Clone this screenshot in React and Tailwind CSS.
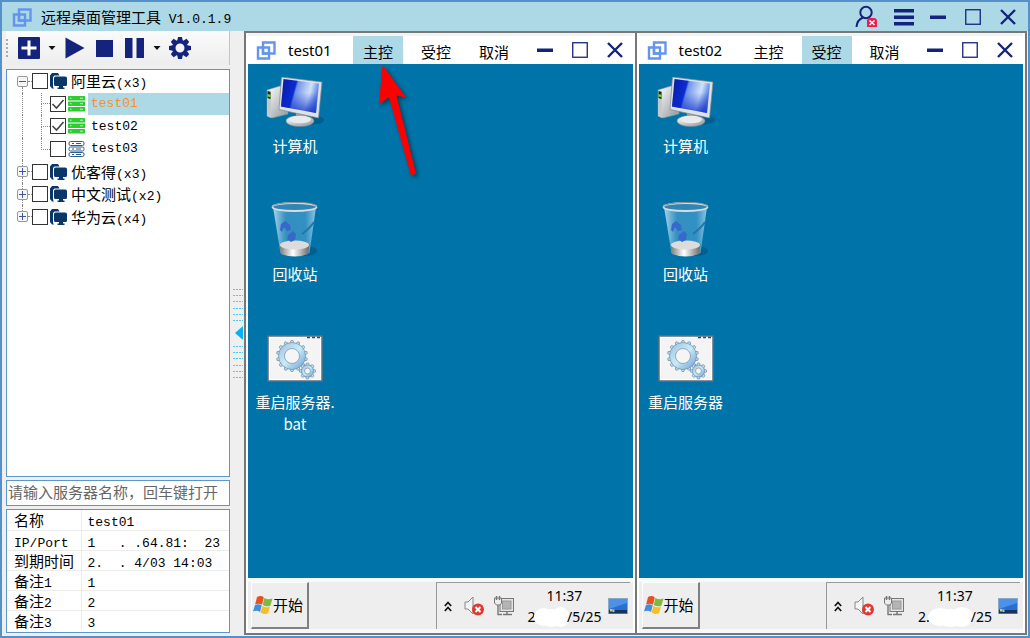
import React from "react";
import clsx from "clsx";

const NAVY = "#14247c";

const groups = [
  {
    id: "aliyun",
    name: "阿里云",
    count: 3,
    open: true,
    servers: [
      { name: "test01", online: true, checked: true, selected: true },
      { name: "test02", online: true, checked: true },
      { name: "test03", online: false, checked: false },
    ],
  },
  { id: "ucloud", name: "优客得", count: 3 },
  { id: "test", name: "中文测试", count: 2 },
  { id: "huawei", name: "华为云", count: 4 },
];

const details = [
  { label: "名称", value: "test01" },
  { label: "IP/Port", value: "1   . .64.81:  23", mono: true },
  { label: "到期时间", value: "2.  . 4/03 14:03" },
  { label: "备注", suffix: "1", value: "1" },
  { label: "备注", suffix: "2", value: "2" },
  { label: "备注", suffix: "3", value: "3" },
];

const tabs = ["主控", "受控", "取消"];

const sessions = [
  {
    name: "test01",
    active: "主控",
    script: ["重启服务器.", "bat"],
    date: ["2", "/5/25"],
    arrow: true,
  },
  {
    name: "test02",
    active: "受控",
    script: ["重启服务器"],
    date: ["2.", "/25"],
  },
];

function Mono({ children }) {
  return (
    <span className="whitespace-pre font-['Liberation_Mono',monospace] text-[13px] leading-none">
      {children}
    </span>
  );
}

/* ---------- icons ---------- */

function LogoIcon() {
  return (
    <svg className="h-5 w-5 shrink-0" viewBox="0 0 20 20" fill="none" stroke="#6495ed" strokeWidth="2.400">
      <path d="M7 2.500h11.500v11H7z" />
      <path d="M2 7.500h11v11H2z" />
      <path d="M7 7.500v6h6" />
    </svg>
  );
}

function MinimizeIcon() {
  return (
    <svg className="h-4 w-4" viewBox="0 0 16 16">
      <rect y="6.500" width="16" height="3.500" fill={NAVY} />
    </svg>
  );
}

function MaximizeIcon() {
  return (
    <svg className="h-4 w-4" viewBox="0 0 16 16">
      <rect x=".75" y=".75" width="14.500" height="14.500" fill="none" stroke={NAVY} strokeWidth="1.300" />
    </svg>
  );
}

function CloseIcon() {
  return (
    <svg className="h-4 w-4" viewBox="0 0 16 16">
      <path d="M1 1l14 14M15 1L1 15" stroke={NAVY} strokeWidth="2.400" />
    </svg>
  );
}

function UserIcon() {
  return (
    <svg className="h-[23px] w-[23px]" viewBox="0 0 23 23" fill="none">
      <circle cx="11" cy="7.500" r="5.700" stroke={NAVY} strokeWidth="2" />
      <path d="M1.500 22c.3-5 3-8 6.500-9.500" stroke={NAVY} strokeWidth="2" />
      <path d="M14 13h6l2 2v7H12v-7z" fill="#ee1c4a" />
      <path d="M14.500 15.500l5 4.500M19.500 15.500l-5 4.500" stroke="#fff" strokeWidth="1.600" />
    </svg>
  );
}

function MenuIcon() {
  return (
    <svg className="h-[18px] w-5" viewBox="0 0 20 18" fill={NAVY}>
      <rect y="1" width="20" height="3.500" />
      <rect y="7.500" width="20" height="3.500" />
      <rect y="14" width="20" height="3.500" />
    </svg>
  );
}

function CaretIcon() {
  return (
    <svg className="h-1 w-2" viewBox="0 0 8 4">
      <path d="M.5 0h7L4 4z" fill="#111" />
    </svg>
  );
}

function GearIcon() {
  return (
    <svg className="h-[22px] w-[22px]" viewBox="-11 -11 22 22" fill={NAVY}>
      {[0, 45, 90, 135, 180, 225, 270, 315].map((a) => (
        <path key={a} d="M-2.800-7L-2-11H2L2.800-7z" transform={`rotate(${a})`} />
      ))}
      <circle r="6.200" fill="none" stroke={NAVY} strokeWidth="3.400" />
    </svg>
  );
}

// folder with a monitor in front of it
function GroupIcon() {
  return (
    <svg className="h-4 w-[17px] shrink-0" viewBox="0 0 17 16" fill="#0b3768">
      <path d="M0 2.500L2 0h6l1.500 2.500h-5L3 4v10l1 1.500H2L0 13z" />
      <path d="M4 5Q4 3.500 5.500 3.500H15q2 0 2 1.500v6.500q0 1.500-1.500 1.500H13v1.500h1.500V16h-7v-1.500H9V13H5.500Q4 13 4 11.500z" />
    </svg>
  );
}

function ServerIcon({ online }) {
  return (
    <svg className="h-4 w-[17px] shrink-0" viewBox="0 0 17 16">
      {[0, 5.5, 11].map((y) =>
        online ? (
          <g key={y}>
            <rect y={y} width="17" height="4.500" rx=".5" fill="#2ecc33" />
            <path d={`M2 ${y + 2.200}h1.500M12 ${y + 2.200}h3`} stroke="#c9f5ca" />
          </g>
        ) : (
          <g key={y} fill="none" stroke="#2c5c8c">
            <rect x="1" y={y + 0.5} width="15" height="4" rx="1.500" />
            <path d={`M4 ${y + 2.500}h2M8 ${y + 2.500}h5`} />
          </g>
        )
      )}
    </svg>
  );
}

function ComputerIcon() {
  return (
    <svg className="h-[50px] w-[60px]" viewBox="0 0 60 50">
      <defs>
        <linearGradient id="screen" x1="0" y1="0" x2="1" y2=".25">
          <stop offset="0" stopColor="#0a1aa0" />
          <stop offset=".4" stopColor="#0b2bd4" />
          <stop offset=".45" stopColor="#6f93ea" />
          <stop offset=".8" stopColor="#cfe2fb" />
          <stop offset="1" stopColor="#5f86e4" />
        </linearGradient>
        <linearGradient id="shade" x1="0" y1="0" x2="0" y2="1">
          <stop offset=".4" stopColor="#0a2ac8" stopOpacity="0" />
          <stop offset="1" stopColor="#0a2ac8" stopOpacity=".8" />
        </linearGradient>
        <linearGradient id="metal" x1="0" y1="0" x2="1" y2="1">
          <stop offset="0" stopColor="#fff" />
          <stop offset="1" stopColor="#8e959b" />
        </linearGradient>
      </defs>
      <ellipse cx="44" cy="43" rx="15" ry="5" fill="#03416b" opacity=".4" />
      <path d="M2 13l13-4 8 3v25L7 41l-5-2z" fill="url(#metal)" stroke="#8b959d" strokeWidth=".5" />
      <path d="M2 13l4 1v27l-4-2z" fill="#c5c9cc" />
      <path d="M2.500 14l3 1v7l-3-1z" fill="#222" />
      <path d="M2.500 17l3 .7v2.500l-3-.7z" fill="#65e52b" />
      <path d="M31 34l10 3v7H31z" fill="#9ba1a6" />
      <ellipse cx="35" cy="44" rx="14" ry="5.500" fill="url(#metal)" stroke="#7d868d" strokeWidth=".6" />
      <ellipse cx="35" cy="42.500" rx="11" ry="3.800" fill="#e8eaec" />
      <path d="M16.500 0L57 5l-3.500 36L14 32.500z" fill="#dfe2e5" stroke="#7c868e" strokeWidth=".7" />
      <path d="M18.500 2L54 6.500 51 36 16 29.500z" fill="url(#screen)" />
      <path d="M18.500 2L54 6.500 51 36 16 29.500z" fill="url(#shade)" />
    </svg>
  );
}

function BinIcon() {
  return (
    <svg className="h-14 w-12" viewBox="0 0 48 56">
      <defs>
        <linearGradient id="glass" x1="0" y1="0" x2="1" y2="0">
          <stop offset="0" stopColor="#b9e0f2" stopOpacity=".9" />
          <stop offset=".3" stopColor="#4296c6" stopOpacity=".8" />
          <stop offset=".75" stopColor="#3e97c8" stopOpacity=".8" />
          <stop offset="1" stopColor="#9cd0ea" stopOpacity=".9" />
        </linearGradient>
        <linearGradient id="base" x1="0" y1="0" x2="1" y2="0">
          <stop offset="0" stopColor="#777" />
          <stop offset=".45" stopColor="#fff" />
          <stop offset="1" stopColor="#666" />
        </linearGradient>
      </defs>
      <ellipse cx="34" cy="49" rx="12" ry="5" fill="#024a78" opacity=".5" />
      <path d="M2 5h43l-6.500 46q-15 6-29 0z" fill="url(#glass)" />
      <path d="M8.500 43l30-1-1.500 10q-13 5-27 0z" fill="url(#base)" />
      <ellipse cx="23.500" cy="43" rx="14.500" ry="4.500" fill="#dcdcdc" />
      <path d="M10 22l4-3 5 4 1 5-4 1-3-4-2 5-2-2zM17 33l5-4 3 3-1 6-4 2-4-3z" fill="#3769cc" />
      <path d="M31 32q8-6 12-12" stroke="#2276a8" strokeWidth="2" fill="none" />
      <ellipse cx="23.500" cy="5" rx="22" ry="4" fill="#2f86b6" stroke="#d5dbdf" strokeWidth="1.800" />
      <path d="M1.500 5q1-4 22-4.500T45.500 5" fill="none" stroke="#777" strokeWidth=".8" />
    </svg>
  );
}

function Cog({ radius, teeth, hole, ...props }) {
  return (
    <g {...props} fill="url(#cog)" stroke="#6f8faa" strokeWidth=".7">
      {Array.from({ length: teeth }, (_, i) => (
        <path
          key={i}
          d={`M-2 ${-radius + 1}L-1-${radius + 2}H1L2 ${-radius + 1}z`}
          transform={`rotate(${(360 / teeth) * i})`}
        />
      ))}
      <circle r={radius} />
      <circle r={hole} fill="#f5f5f5" />
    </g>
  );
}

function BatchIcon() {
  return (
    <svg className="h-[47px] w-[56px]" viewBox="0 0 56 47">
      <defs>
        <linearGradient id="cog" x1="0" y1="0" x2="1" y2="1">
          <stop offset="0" stopColor="#9dbbe0" />
          <stop offset=".5" stopColor="#c9ecf6" />
          <stop offset="1" stopColor="#6b9bd8" />
        </linearGradient>
      </defs>
      <rect x="1" y="1" width="54" height="45" fill="#f4f4f4" stroke="#5c7080" strokeWidth="1.500" />
      <rect x="2.500" y="2.500" width="51" height="42" fill="none" stroke="#fff" />
      <path d="M40 2.500h3M45 2.500h3M50 2.500h3" stroke="#33475c" strokeWidth="1.500" />
      <Cog radius={13.5} teeth={14} hole={7.5} transform="translate(25 21)" />
      <Cog radius={6} teeth={8} hole={3} transform="translate(40.500 36)" />
    </svg>
  );
}

function WindowsFlag() {
  return (
    <svg className="h-[18px] w-5 shrink-0" viewBox="0 0 20 18">
      <path d="M4 1Q8-1 10.800 1.500L9 8.800Q6 6.800 2.200 8.300z" fill="#e8501e" />
      <path d="M11.300 2Q15 4.300 19.500 2.500l-2.200 7.200q-4 1.500-7.500-.6z" fill="#7fb93a" />
      <path d="M2 9Q6 7.500 8.700 9.500L7 16Q4 14 0 15.500z" fill="#3f8fdc" />
      <path d="M9.500 10q3.500 2 7.500.7L15 17.300q-4 1.500-7.500-.7z" fill="#f8be27" />
    </svg>
  );
}

function ChevronsUp() {
  return (
    <svg className="h-[11px] w-2" viewBox="0 0 8 11" fill="none" stroke="#111" strokeWidth="1.700">
      <path d="M.8 5L4 1.500 7.200 5M.8 10L4 6.500 7.200 10" />
    </svg>
  );
}

function MutedIcon() {
  return (
    <svg className="h-5 w-5" viewBox="0 0 20 20">
      <path d="M1 6h3l5-5v17l-5-5H1z" fill="#f4f4f4" stroke="#888" />
      <circle cx="14" cy="13.500" r="6" fill="#dd3a31" />
      <path d="M11.500 11l5 5M16.500 11l-5 5" stroke="#fff" strokeWidth="2" />
    </svg>
  );
}

function NetworkIcon() {
  return (
    <svg className="h-5 w-5" viewBox="0 0 20 20" fill="none" stroke="#777">
      <rect x="6" y="2.500" width="13.500" height="13" fill="#e4e4e4" />
      <rect x="8.500" y="5" width="8.500" height="8" fill="#b4b4b4" stroke="#999" />
      <path d="M9 18.500h9M13 16v2" strokeWidth="1.500" />
      <path d="M.5 2h7v5L6 9H2.500l-2-2z" fill="#eee" />
      <path d="M2.500 0v4M5.500 0v4M4 9v9.500h4" strokeWidth="1.400" />
    </svg>
  );
}

function ShowDesktopIcon() {
  return (
    <svg className="h-[17px] w-5 shrink-0" viewBox="0 0 20 17">
      <rect x=".5" y=".5" width="19" height="15" fill="#2a6fd0" stroke="#8aa7c4" />
      <path d="M1 1h18v4L1 11z" fill="#4d92e8" />
      <path d="M1 12h18v3.500H1z" fill="#17325c" />
      <path d="M2 11h2.500v2.500H2z" fill="#f3c343" />
      <path d="M4.500 11.500h2V14h-2z" fill="#7ad0f0" />
    </svg>
  );
}

function ArrowMark() {
  return (
    <svg
      className="absolute left-[126px] top-0 h-[120px] w-[50px] drop-shadow-[2px_2px_2px_rgba(0,0,0,0.45)]"
      viewBox="0 0 50 120"
    >
      <path d="M8.500 1L32 33.500 22.500 31.500 42 109.500 37 111.500 15 33 5 41z" fill="#fe0000" />
    </svg>
  );
}

/* ---------- shared ---------- */

function WindowButtons() {
  return (
    <div className="flex items-center gap-[19px]">
      <button type="button" aria-label="最小化">
        <MinimizeIcon />
      </button>
      <button type="button" aria-label="最大化">
        <MaximizeIcon />
      </button>
      <button type="button" aria-label="关闭">
        <CloseIcon />
      </button>
    </div>
  );
}

function CheckBox({ id, checked }) {
  return (
    <span className="grid shrink-0">
      <input
        id={id}
        type="checkbox"
        defaultChecked={checked}
        className="peer col-start-1 row-start-1 h-4 w-4 appearance-none border border-[#333] bg-white"
      />
      <svg
        className="pointer-events-none invisible col-start-1 row-start-1 h-4 w-4 peer-checked:visible"
        viewBox="0 0 16 16"
        fill="none"
        stroke="#444"
        strokeWidth="1.600"
      >
        <path d="M2.500 8l4 4 7-8" />
      </svg>
    </span>
  );
}

/* ---------- sidebar ---------- */

function TitleBar() {
  return (
    <header className="flex h-[29px] shrink-0 items-center bg-[#add8e6] pl-2.5 pr-3">
      <LogoIcon />
      <h1 className="ml-[9px] flex-1 text-[15px] leading-5">
        远程桌面管理工具<Mono> V1.0.1.9</Mono>
      </h1>
      <button type="button" aria-label="用户">
        <UserIcon />
      </button>
      <button type="button" aria-label="菜单" className="ml-4 mr-4">
        <MenuIcon />
      </button>
      <WindowButtons />
    </header>
  );
}

function Toolbar() {
  return (
    <div className="flex h-[34px] shrink-0 items-center border-r border-[#c4c4c4] bg-linear-to-b from-[#fbfbfb] to-[#ededed]">
      <span className="h-[18px] border-l-2 border-dotted border-[#aaa]" />
      <button type="button" aria-label="新建" className="ml-2.5">
        <svg className="h-[22px] w-[22px]" viewBox="0 0 22 22">
          <rect width="22" height="22" rx="1" fill={NAVY} />
          <path d="M11 3.500v15M3.500 11h15" stroke="#fff" strokeWidth="3" />
        </svg>
      </button>
      <button type="button" aria-label="新建选项" className="ml-2">
        <CaretIcon />
      </button>
      <button type="button" aria-label="启动" className="ml-[9px]">
        <svg className="h-[22px] w-5" viewBox="0 0 20 22">
          <path d="M.5 .5L19.500 11 .5 21.500z" fill={NAVY} />
        </svg>
      </button>
      <button type="button" aria-label="停止" className="ml-[11px]">
        <svg className="h-[17px] w-[17px]" viewBox="0 0 17 17">
          <rect width="17" height="17" fill={NAVY} />
        </svg>
      </button>
      <button type="button" aria-label="暂停" className="ml-3">
        <svg className="h-5 w-5" viewBox="0 0 20 20" fill={NAVY}>
          <rect width="7.500" height="20" />
          <rect x="11.500" width="7.500" height="20" />
        </svg>
      </button>
      <button type="button" aria-label="暂停选项" className="ml-2">
        <CaretIcon />
      </button>
      <button type="button" aria-label="设置" className="ml-2">
        <GearIcon />
      </button>
    </div>
  );
}

function GroupRow({ group, first, last }) {
  return (
    <li className="flex items-center">
      <div className="flex w-[11px] flex-col items-center self-stretch">
        <span className={clsx("flex-1", !first && "border-l border-dotted border-[#888]")} />
        <button
          type="button"
          aria-label={group.open ? "收起" : "展开"}
          className="grid h-[11px] w-[11px] place-items-center rounded-xs border border-[#999] bg-[#f6f6f6]"
        >
          <svg className="h-[7px] w-[7px]" viewBox="0 0 7 7" stroke="#3b57a5">
            <path d={group.open ? "M0 3.500h7" : "M0 3.500h7M3.500 0v7"} />
          </svg>
        </button>
        <span className={clsx("flex-1", !last && "border-l border-dotted border-[#888]")} />
      </div>
      <span className="w-1 border-t border-dotted border-[#888]" />
      <CheckBox id={group.id} />
      <label htmlFor={group.id} className="ml-0.5 flex items-center gap-1">
        <GroupIcon />
        <span>
          {group.name}
          <Mono>(x{group.count})</Mono>
        </span>
      </label>
    </li>
  );
}

function ServerRow({ server, last }) {
  return (
    <li className="flex items-center">
      <span className="ml-[5px] w-[19px] self-stretch border-l border-dotted border-[#888]" />
      <div className="flex w-[9px] flex-col self-stretch">
        <span className="flex-1 border-b border-l border-dotted border-[#888]" />
        <span className={clsx("flex-1", !last && "border-l border-dotted border-[#888]")} />
      </div>
      <CheckBox id={server.name} checked={server.checked} />
      <label htmlFor={server.name} className="ml-0.5 flex flex-1 items-center gap-[3px] self-stretch">
        <ServerIcon online={server.online} />
        <span
          className={clsx(
            "flex flex-1 items-center self-stretch pl-[3px]",
            server.selected && "bg-[#add8e6] text-[#f7931e]"
          )}
        >
          <Mono>{server.name}</Mono>
        </span>
      </label>
    </li>
  );
}

function ServerTree() {
  return (
    <div className="mt-1 min-h-0 flex-1 border border-[#5b97cb] bg-white pl-2.5">
      <ul className="grid h-[158px] grid-rows-7 text-[15px] leading-5">
        {groups.map((group, index) => (
          <React.Fragment key={group.id}>
            <GroupRow group={group} first={index === 0} last={index === groups.length - 1} />
            {group.servers?.map((server, i) => (
              <ServerRow key={server.name} server={server} last={i === group.servers.length - 1} />
            ))}
          </React.Fragment>
        ))}
      </ul>
    </div>
  );
}

function DetailTable() {
  return (
    <div className="border border-[#5b97cb] bg-white pb-0.5">
      <table className="w-full table-fixed border-collapse text-left text-[15px] leading-[19px]">
        <tbody>
          {details.map((row, index) => (
            <tr key={index} className="h-5 border-b border-[#ececec] last:border-b-0">
              <th scope="row" className="w-[74px] whitespace-nowrap border-r border-[#ececec] p-0 pl-[7px] font-normal">
                {row.mono ? <Mono>{row.label}</Mono> : row.label}
                {row.suffix && <Mono>{row.suffix}</Mono>}
              </th>
              <td className="p-0 pl-1.5">
                <Mono>{row.value}</Mono>
              </td>
            </tr>
          ))}
        </tbody>
      </table>
    </div>
  );
}

function Sidebar() {
  return (
    <aside className="flex w-[228px] shrink-0 flex-col pb-[3px] pl-1">
      <Toolbar />
      <ServerTree />
      <input
        type="text"
        aria-label="服务器名称"
        placeholder="请输入服务器名称，回车键打开"
        className="my-[3px] h-[26px] w-full shrink-0 border border-[#5b97cb] bg-white pb-1 pl-px text-[15px] placeholder:text-[#666]"
      />
      <DetailTable />
    </aside>
  );
}

function Splitter() {
  const rows = [0, 6, 12, 19, 25, 31, 57, 63, 69, 76, 82, 88];
  return (
    <div className="flex w-3.5 shrink-0 items-center justify-end">
      <button type="button" aria-label="收起侧栏">
        <svg className="h-[90px] w-[11px]" viewBox="0 0 11 90">
          {rows.map((y) => (
            <path key={y} d={`M0 ${y + 0.5}h10`} stroke="#4cc9f2" strokeDasharray="2 1" />
          ))}
          <path d="M10 37v14L2 44z" fill="#00b4f5" />
        </svg>
      </button>
    </div>
  );
}

/* ---------- remote sessions ---------- */

function DesktopItem({ icon, lines }) {
  return (
    <li className="flex h-32 w-[94px] flex-col items-center">
      <div className="flex h-14 items-center">{icon}</div>
      <div className="mt-[5px] whitespace-nowrap text-center text-[15px] leading-[22px] text-white">
        {lines.map((line) => (
          <div key={line}>{line}</div>
        ))}
      </div>
    </li>
  );
}

function Taskbar({ date }) {
  return (
    <footer className="flex h-[55px] shrink-0 items-stretch justify-between border-y-4 border-[#f6f8fb] bg-[#eee] pl-[3px]">
      <button
        type="button"
        className="flex w-[58px] items-center border-b-2 border-l border-r-2 border-t border-b-[#808080] border-l-white border-r-[#808080] border-t-white pl-px text-[15px]"
      >
        <WindowsFlag />
        <span className="whitespace-nowrap">开始</span>
      </button>
      <div className="mr-[3px] flex w-[194px] items-center border-l border-t border-[#999] pl-[7px]">
        <ChevronsUp />
        <span className="ml-3">
          <MutedIcon />
        </span>
        <span className="ml-2.5">
          <NetworkIcon />
        </span>
        <div className="ml-auto text-center font-['Noto_Sans',sans-serif] text-[14px] leading-[21px]">
          <div>11:37</div>
          <div className="flex w-[74px] justify-between">
            <span>{date[0]}</span>
            <svg className="-mx-0.5 h-[21px] min-w-0 flex-1" viewBox="0 0 40 21" preserveAspectRatio="none" fill="#fff">
              <ellipse cx="11" cy="11" rx="11" ry="9" />
              <ellipse cx="20" cy="12" rx="12" ry="9" />
              <ellipse cx="30" cy="11" rx="10" ry="10" />
            </svg>
            <span>{date[1]}</span>
          </div>
        </div>
        <span className="ml-1.5 mr-0.5">
          <ShowDesktopIcon />
        </span>
      </div>
    </footer>
  );
}

function SessionWindow({ session }) {
  return (
    <section className="flex min-w-0 flex-col bg-white px-0.5">
      <div className="flex h-[31px] shrink-0 items-stretch border-t-3 border-[#f3f3f3]">
        <div className="flex w-[105px] items-center pl-2">
          <LogoIcon />
          <h2 className="ml-3 font-['Noto_Sans',sans-serif] text-[15px]">{session.name}</h2>
        </div>
        <div className="flex gap-2">
          {tabs.map((tab) => (
            <button
              key={tab}
              type="button"
              className={clsx(
                "w-[50px] whitespace-nowrap pt-1 text-[15px] leading-5",
                tab === session.active && "bg-[#add8e6]"
              )}
            >
              {tab}
            </button>
          ))}
        </div>
        <div className="ml-auto flex items-center pr-2.5">
          <WindowButtons />
        </div>
      </div>
      <div className="relative min-h-0 flex-1 bg-[#0074a8] pt-2.5">
        <ul>
          <DesktopItem icon={<ComputerIcon />} lines={["计算机"]} />
          <DesktopItem icon={<BinIcon />} lines={["回收站"]} />
          <DesktopItem icon={<BatchIcon />} lines={session.script} />
        </ul>
        {session.arrow && <ArrowMark />}
      </div>
      <Taskbar date={session.date} />
    </section>
  );
}

export default function App() {
  return (
    <div className="flex h-screen flex-col border-2 border-[#5590c8] bg-[#efefef] font-['Noto_Sans_CJK_SC',sans-serif] text-black">
      <TitleBar />
      <div className="flex min-h-0 flex-1">
        <Sidebar />
        <Splitter />
        <main className="mb-px mr-px grid flex-1 grid-cols-2 gap-0.5 bg-[#777] p-0.5">
          {sessions.map((session) => (
            <SessionWindow key={session.name} session={session} />
          ))}
        </main>
      </div>
    </div>
  );
}
